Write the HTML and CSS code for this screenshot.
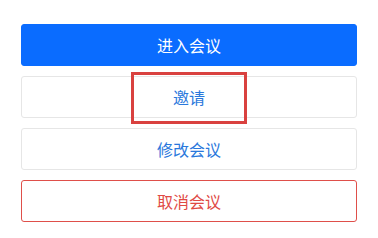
FILE: index.html
```html
<!DOCTYPE html>
<html lang="zh-CN">

<head>
    <meta charset="UTF-8" />
    <meta name="viewport" content="width=device-width, initial-scale=1" />
    <title>会议操作</title>
    <link rel="stylesheet" href="styles.css">
</head>

<body>
    <div class="lista-botones">
        <button class="boton boton-primario">进入会议</button>
        <button class="boton boton-normal">邀请</button>
        <button class="boton boton-normal">修改会议</button>
        <button class="boton boton-peligro">取消会议</button>
    </div>

    <!-- Marca roja encima del boton de invitar -->
    <div class="marca"></div>
</body>

</html>
```
FILE: styles.css
```css
body {
    font-family: "Noto Sans CJK SC", "Noto Sans", sans-serif;
    margin: 0;
    background-color: white;
    position: relative;
}

.lista-botones {
    display: flex;
    flex-direction: column;
    gap: 10px;
    padding: 24px 21px 0;
}

.boton {
    height: 42px;
    border-radius: 3px;
    font-family: inherit;
    font-size: 16px;
    line-height: 1;
    background-color: white;
    cursor: pointer;
    box-sizing: border-box;
}

.boton-primario {
    background-color: #0a6cff;
    border: 1px solid #0a6cff;
    color: white;
}

.boton-normal {
    border: 1px solid #e6e6e6;
    color: #2a78dc;
}

.boton-peligro {
    border: 1px solid #df4f4a;
    color: #e04a45;
}

.marca {
    position: absolute;
    left: 131px;
    top: 72px;
    width: 116px;
    height: 52px;
    border: 3px solid #d9413f;
    box-sizing: border-box;
}
```
